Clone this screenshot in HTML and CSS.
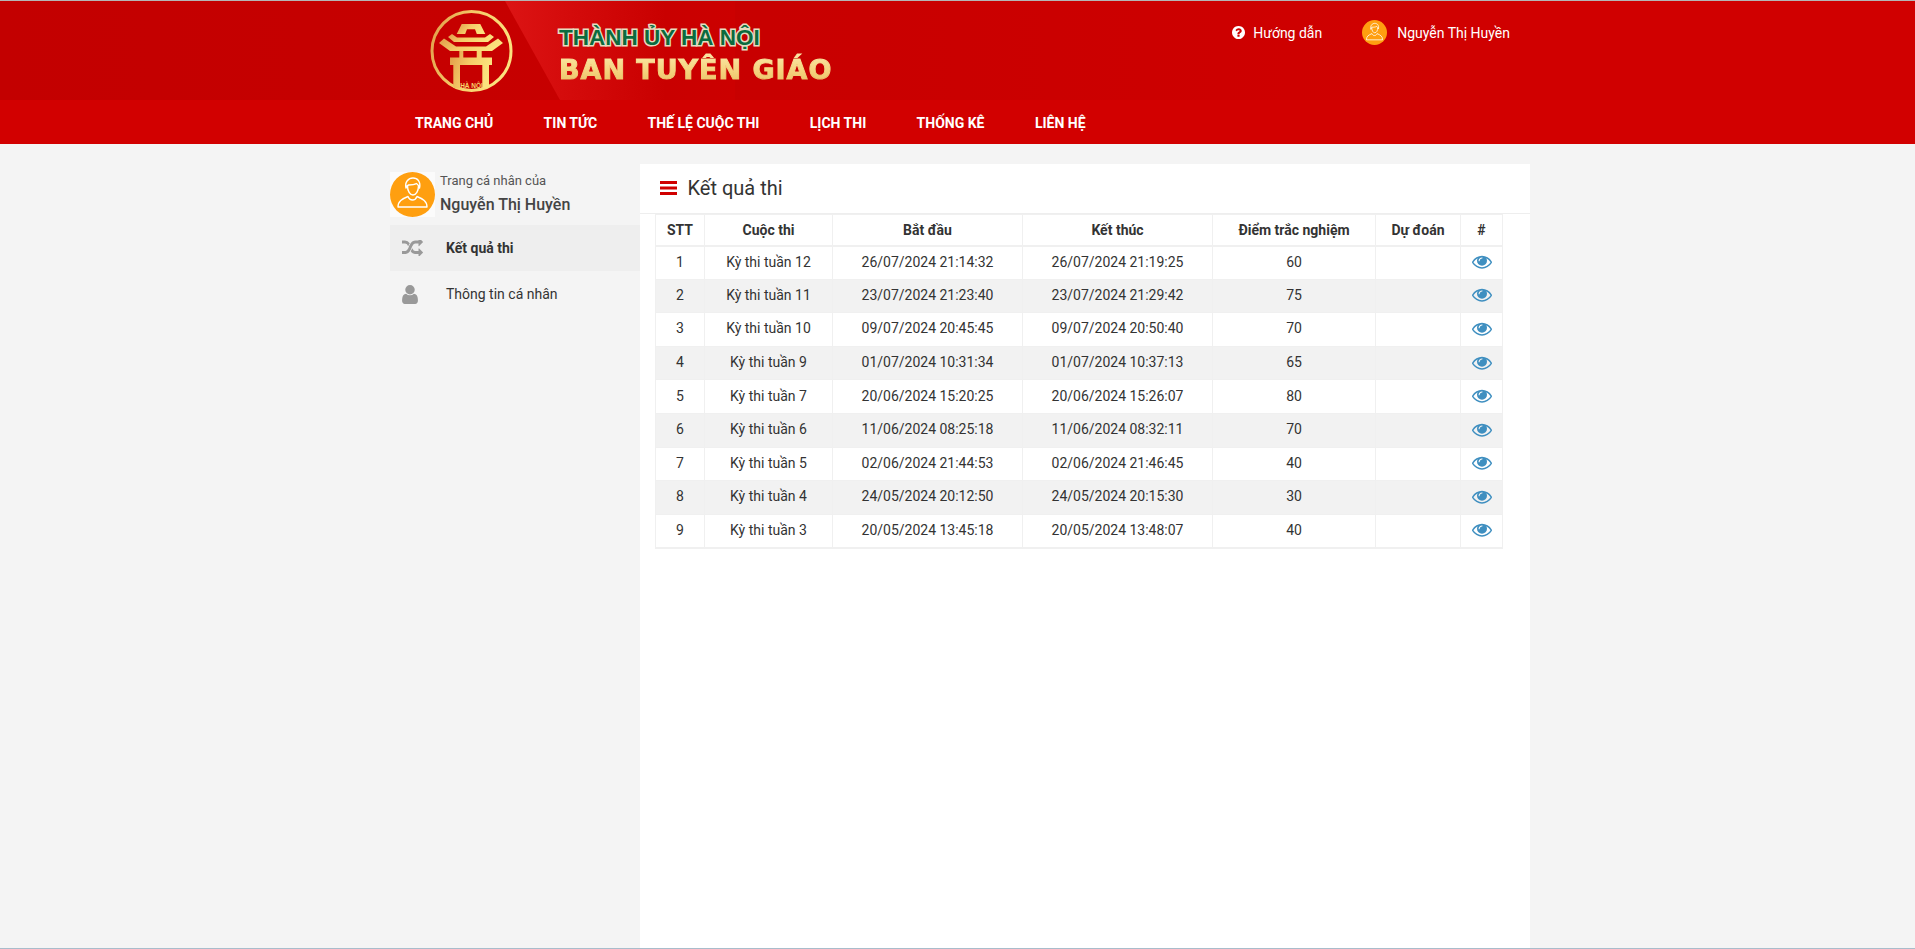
FILE: index.html
```html
<!DOCTYPE html>
<html lang="vi">
<head>
<meta charset="utf-8">
<title>Kết quả thi</title>
<link rel="stylesheet" href="styles.css">
</head>
<body>
<svg class="defs" width="0" height="0" aria-hidden="true">
  <defs>
    <linearGradient id="gold" x1="0" y1="0" x2="1" y2="0.3">
      <stop offset="0" stop-color="#e09a48"/>
      <stop offset="0.5" stop-color="#f5cb68"/>
      <stop offset="1" stop-color="#fbe27e"/>
    </linearGradient>
    <symbol id="avatar" viewBox="0 0 45 45">
      <circle cx="22.5" cy="22.5" r="22.5" fill="#ff9f10"/>
      <g fill="none" stroke="#fff" stroke-width="1.4" stroke-linejoin="round" stroke-linecap="round">
        <path d="M8 35c0-6 4-8 10-10.500 1 2.500 2.500 3.500 4.500 3.500s3.500-1 4.500-3.500c6 2.500 10 4.500 10 10.500z"/>
        <path d="M17.500 14c0 5 2.500 9 5.500 9s5.500-4 5.500-9"/>
        <path d="M16 16c-1.500-6 2.500-10 7-10 4.500 0 8 3.500 6.500 10-.5-2-1.500-3.500-3-4.500-2.500 1.500-6 1.500-8 1.500-1 .5-2 1.500-2.500 3z"/>
      </g>
    </symbol>
    <symbol id="eye" viewBox="0 224 1792 1344">
      <path d="M1664 960q-152-236-381-353 61 104 61 225 0 185-131.500 316.500t-316.500 131.500-316.500-131.500-131.500-316.500q0-121 61-225-229 117-381 353 133 205 333.500 326.500t434.500 121.500 434.500-121.500 333.500-326.500zm-720-384q0-20-14-34t-34-14q-125 0-214.500 89.500t-89.500 214.500q0 20 14 34t34 14 34-14 14-34q0-86 61-147t147-61q20 0 34-14t14-34zm848 384q0 34-20 69-140 230-376.500 368.500t-499.500 138.500-499.500-139-376.500-368q-20-35-20-69t20-69q140-229 376.500-368t499.500-139 499.500 139 376.500 368q20 35 20 69z"/>
    </symbol>
  </defs>
</svg>

<div class="topline"></div>
<header class="header">
  <div class="banner">
    <div class="streak"></div>
    <div class="wrap banner-row">
      <svg class="logo" viewBox="0 0 84 84" aria-hidden="true">
        <circle cx="41.500" cy="41" r="39.500" fill="none" stroke="url(#gold)" stroke-width="3"/>
        <g fill="url(#gold)">
          <path d="M26.700 24l5-10h18.600l5 10h-8.500l-1.800-4.700H37l-1.800 4.700z"/>
          <path d="M18 27l4-3 5 3.500h28l5-3.500 4 3-6 5H24z"/>
          <path d="M9 33l5-4.500 12 8h30l12-8 5 4.500-11 8H20z"/>
          <path d="M29.300 41h4v6.500h13.400V41h5v6.500H62v7.500h-3v23h-6.700V55H30v23h-6.700V55H20v-7.500h9.300z"/>
        </g>
        <text class="logo-text" x="41.500" y="78" text-anchor="middle">HÀ NỘI</text>
      </svg>
      <div class="brand">
        <div class="brand-top">THÀNH ỦY HÀ NỘI</div>
        <div class="brand-main">BAN TUYÊN GIÁO</div>
      </div>
      <div class="userbar">
        <a class="userlink help">
          <svg class="help-icon" viewBox="128 128 1536 1536" aria-hidden="true"><path d="M1024 1376v-192q0-14-9-23t-23-9h-192q-14 0-23 9t-9 23v192q0 14 9 23t23 9h192q14 0 23-9t9-23zm256-672q0-88-55.500-163t-138.500-116-170-41q-243 0-371 213-15 24 8 42l132 100q7 6 19 6 16 0 25-12 53-68 86-92 34-24 86-24 48 0 85.500 26t37.500 59q0 38-20 61t-68 45q-63 28-115.500 86.500t-52.500 125.500v36q0 14 9 23t23 9h192q14 0 23-9t9-23q0-19 21.500-49.500t54.500-49.500q32-18 49-28.500t46-35 44.500-48 28-60.500 12.500-81zm384 192q0 209-103 385.500t-279.500 279.500-385.500 103-385.500-103-279.500-279.500-103-385.500 103-385.500 279.500-279.500 385.500-103 385.500 103 279.500 279.500 103 385.500z"/></svg>
          Hướng dẫn
        </a>
        <a class="userlink">
          <svg class="avatar-small"><use href="#avatar"/></svg>
          Nguyễn Thị Huyền
        </a>
      </div>
    </div>
  </div>
  <nav class="nav">
    <div class="wrap nav-row">
      <a class="nav-item">TRANG CHỦ</a>
      <a class="nav-item">TIN TỨC</a>
      <a class="nav-item">THẾ LỆ CUỘC THI</a>
      <a class="nav-item">LỊCH THI</a>
      <a class="nav-item">THỐNG KÊ</a>
      <a class="nav-item">LIÊN HỆ</a>
    </div>
  </nav>
</header>

<main class="wrap page">
  <aside class="side">
    <div class="profile">
      <div class="avatar-box"><svg class="avatar-big"><use href="#avatar"/></svg></div>
      <div class="profile-text">
        <div class="profile-label">Trang cá nhân của</div>
        <div class="profile-name">Nguyễn Thị Huyền</div>
      </div>
    </div>
    <a class="side-item active">
      <span class="side-icon">
        <svg class="icon-random" viewBox="0 256 1792 1280" aria-hidden="true"><path d="M666 481q-60 92-137 273-22-45-37-72.500t-40.500-63.500-51-56.500-63-35-81.500-14.500h-224q-14 0-23-9t-9-23v-192q0-14 9-23t23-9h224q250 0 410 225zm1126 799q0 14-9 23l-320 320q-9 9-23 9-13 0-22.500-9.500t-9.500-22.500v-192q-32 0-85 .5t-81 1-73-1-71-5-64-10.500-63-18.500-58-28.500-59-40-55-53.500-56-69.500q59-93 136-273 22 45 37 72.500t40.500 63.500 51 56.500 63 35 81.500 14.500h256v-192q0-14 9-23t23-9q12 0 24 10l319 319q9 9 9 23zm0-896q0 14-9 23l-320 320q-9 9-23 9-13 0-22.500-9.500t-9.500-22.500v-192h-256q-48 0-87 15t-69 45-51 61.500-45 77.500q-32 62-78 171-29 66-49.500 111t-54 105-64 100-74 83-90 68.500-106.500 42-128 16.500h-224q-14 0-23-9t-9-23v-192q0-14 9-23t23-9h224q48 0 87-15t69-45 51-61.500 45-77.500q32-62 78-171 29-66 49.500-111t54-105 64-100 74-83 90-68.500 106.500-42 128-16.500h256v-192q0-14 9-23t23-9q12 0 24 10l319 319q9 9 9 23z"/></svg>
      </span>
      Kết quả thi
    </a>
    <a class="side-item">
      <span class="side-icon">
        <svg class="icon-user" viewBox="256 128 1280 1536" aria-hidden="true"><path d="M1536 1399q0 109-62.500 187t-150.500 78h-854q-88 0-150.500-78t-62.500-187q0-85 8.500-160.500t31.500-152 58.500-131 94-89 134.500-34.500q131 128 313 128t313-128q76 0 134.500 34.500t94 89 58.500 131 31.500 152 8.500 160.500zm-256-887q0 159-112.500 271.500t-271.500 112.500-271.500-112.500-112.500-271.500 112.500-271.500 271.500-112.500 271.500 112.500 112.500 271.500z"/></svg>
      </span>
      Thông tin cá nhân
    </a>
  </aside>

  <section class="panel">
    <div class="panel-head">
      <svg class="bars" viewBox="0 0 17 14" aria-hidden="true"><rect width="17" height="3"/><rect y="5.500" width="17" height="3"/><rect y="11" width="17" height="3"/></svg>
      <h1 class="panel-title">Kết quả thi</h1>
    </div>
    <div class="table-wrap">
      <table class="results">
        <colgroup>
          <col class="c-stt"><col class="c-name"><col class="c-date"><col class="c-date2"><col class="c-score"><col class="c-pred"><col class="c-act">
        </colgroup>
        <thead>
          <tr><th>STT</th><th>Cuộc thi</th><th>Bắt đầu</th><th>Kết thúc</th><th>Điểm trắc nghiệm</th><th>Dự đoán</th><th>#</th></tr>
        </thead>
        <tbody>
          <tr><td>1</td><td>Kỳ thi tuần 12</td><td>26/07/2024 21:14:32</td><td>26/07/2024 21:19:25</td><td>60</td><td></td><td><svg class="eye"><use href="#eye"/></svg></td></tr>
          <tr><td>2</td><td>Kỳ thi tuần 11</td><td>23/07/2024 21:23:40</td><td>23/07/2024 21:29:42</td><td>75</td><td></td><td><svg class="eye"><use href="#eye"/></svg></td></tr>
          <tr><td>3</td><td>Kỳ thi tuần 10</td><td>09/07/2024 20:45:45</td><td>09/07/2024 20:50:40</td><td>70</td><td></td><td><svg class="eye"><use href="#eye"/></svg></td></tr>
          <tr><td>4</td><td>Kỳ thi tuần 9</td><td>01/07/2024 10:31:34</td><td>01/07/2024 10:37:13</td><td>65</td><td></td><td><svg class="eye"><use href="#eye"/></svg></td></tr>
          <tr><td>5</td><td>Kỳ thi tuần 7</td><td>20/06/2024 15:20:25</td><td>20/06/2024 15:26:07</td><td>80</td><td></td><td><svg class="eye"><use href="#eye"/></svg></td></tr>
          <tr><td>6</td><td>Kỳ thi tuần 6</td><td>11/06/2024 08:25:18</td><td>11/06/2024 08:32:11</td><td>70</td><td></td><td><svg class="eye"><use href="#eye"/></svg></td></tr>
          <tr><td>7</td><td>Kỳ thi tuần 5</td><td>02/06/2024 21:44:53</td><td>02/06/2024 21:46:45</td><td>40</td><td></td><td><svg class="eye"><use href="#eye"/></svg></td></tr>
          <tr><td>8</td><td>Kỳ thi tuần 4</td><td>24/05/2024 20:12:50</td><td>24/05/2024 20:15:30</td><td>30</td><td></td><td><svg class="eye"><use href="#eye"/></svg></td></tr>
          <tr><td>9</td><td>Kỳ thi tuần 3</td><td>20/05/2024 13:45:18</td><td>20/05/2024 13:48:07</td><td>40</td><td></td><td><svg class="eye"><use href="#eye"/></svg></td></tr>
        </tbody>
      </table>
    </div>
  </section>
</main>
<div class="bottomline"></div>
</body>
</html>
```

FILE: styles.css
```css
* { box-sizing: border-box; }
html, body { margin: 0; height: 949px; overflow: hidden; }
body {
  display: flex;
  flex-direction: column;
  background: #f4f4f4;
  color: #333;
  font-family: Roboto, "Liberation Sans", sans-serif;
  font-size: 14px;
}
.defs { position: absolute; }
.topline { height: 1px; background: #b5b5b5; flex: none; }
.bottomline { height: 1px; background: #a9bccb; flex: none; }
.wrap { width: 1140px; margin-left: 390px; }

.header { flex: none; background: #d00000; }
.banner {
  position: relative;
  height: 99px;
  background: linear-gradient(90deg, #c30000 0, #c80000 40%, #cc0000 60%, #d00000 75%);
  overflow: hidden;
}
.streak {
  position: absolute;
  left: 505px;
  top: 0;
  width: 230px;
  height: 99px;
  background: linear-gradient(90deg, #dc1414 0, #d50c0c 25%, #c90000 70%, #cc0000 100%);
  clip-path: polygon(0 0, 100% 0, 100% 100%, 55px 100%);
}
.banner-row { position: relative; display: flex; align-items: flex-start; }
.logo { width: 84px; height: 84px; margin: 9px 0 0 40px; flex: none; }
.logo-text { font: bold 6.500px "Liberation Sans", sans-serif; fill: #f6d46e; }
.brand { margin-left: 45px; padding-top: 23px; }
.brand-top {
  font: bold 22.500px/27px "Liberation Sans", sans-serif;
  color: #0b6b3e;
  -webkit-text-stroke: 3px #e5dcc0;
  paint-order: stroke fill;
  white-space: nowrap;
}
.brand-main {
  font: bold 27px/34px "DejaVu Sans", sans-serif;
  letter-spacing: 0.960px;
  -webkit-text-stroke: 1px transparent;
  background: linear-gradient(180deg, #fbe9a8 0, #f4d27c 55%, #e6bd62 100%);
  -webkit-background-clip: text;
  background-clip: text;
  color: transparent;
  white-space: nowrap;
  margin-top: 2px;
}
.userbar {
  margin-left: auto;
  margin-right: 20px;
  padding-top: 19px;
  display: flex;
  align-items: center;
  gap: 40px;
  color: #fff;
}
.userlink { display: flex; align-items: center; gap: 10px; height: 25px; color: #fff; white-space: nowrap; }
.help { gap: 8px; }
.help-icon { width: 13px; height: 13px; fill: #fff; }
.avatar-small { width: 25px; height: 25px; }

.nav { background: #d20000; height: 44px; }
.nav-row { display: flex; height: 44px; align-items: center; padding-top: 1px; }
.nav-item {
  padding: 0 25.200px;
  color: #fff;
  font-weight: 700;
  font-size: 14px;
  white-space: nowrap;
}
.nav-item:first-child { padding-left: 25px; }

.page { flex: 1; min-height: 0; display: flex; padding-top: 20px; }
.side { width: 250px; flex: none; }
.profile { display: flex; height: 45px; margin: 8px 0 8px; }
.avatar-box { width: 45px; height: 45px; background: #fbfbfb; flex: none; }
.avatar-big { width: 45px; height: 45px; display: block; }
.profile-text { margin-left: 5px; }
.profile-label { font-size: 13px; line-height: 18px; color: #555; }
.profile-name { font-size: 16px; font-weight: 500; line-height: 24px; color: #444; margin-top: 3px; }
.side-item {
  display: flex;
  align-items: center;
  height: 46px;
  color: #333;
  font-size: 14px;
}
.side-item.active { background: #eee; font-weight: 700; }
.side-icon { width: 56px; padding-left: 12px; display: flex; flex: none; }
.icon-random { width: 21px; height: 16px; fill: #999; }
.icon-user { width: 16px; height: 19px; fill: #999; margin-left: 0; }

.panel { width: 890px; flex: none; background: #fff; display: flex; flex-direction: column; }
.panel-head {
  display: flex;
  align-items: center;
  height: 50px;
  padding-left: 20px;
  padding-bottom: 1px;
  border-bottom: 1px solid #eee;
  flex: none;
}
.bars { width: 17px; height: 14px; fill: #d00000; flex: none; }
.panel-title { margin: 0 0 0 10.500px; font-size: 20px; font-weight: 400; color: #333; }
.table-wrap { padding-left: 15px; }
.results {
  width: 847px;
  border-collapse: collapse;
  table-layout: fixed;
  text-align: center;
}
.c-stt { width: 49px; }
.c-name { width: 128px; }
.c-date { width: 190px; }
.c-date2 { width: 190px; }
.c-score { width: 163px; }
.c-pred { width: 85px; }
.c-act { width: 42px; }
.results th, .results td { border: 1px solid #f0f0f0; padding: 0 4px; }
.results th { height: 31px; font-weight: 700; border-bottom-width: 2px; }
.results td { height: 33.600px; padding-bottom: 2px; }
.results tbody tr:nth-child(even) { background: #f2f2f2; }
.results tbody tr:last-child td { border-bottom-width: 2px; }
.eye { width: 20px; height: 15px; fill: #3f8fc0; display: block; margin: 0 auto; }
```
